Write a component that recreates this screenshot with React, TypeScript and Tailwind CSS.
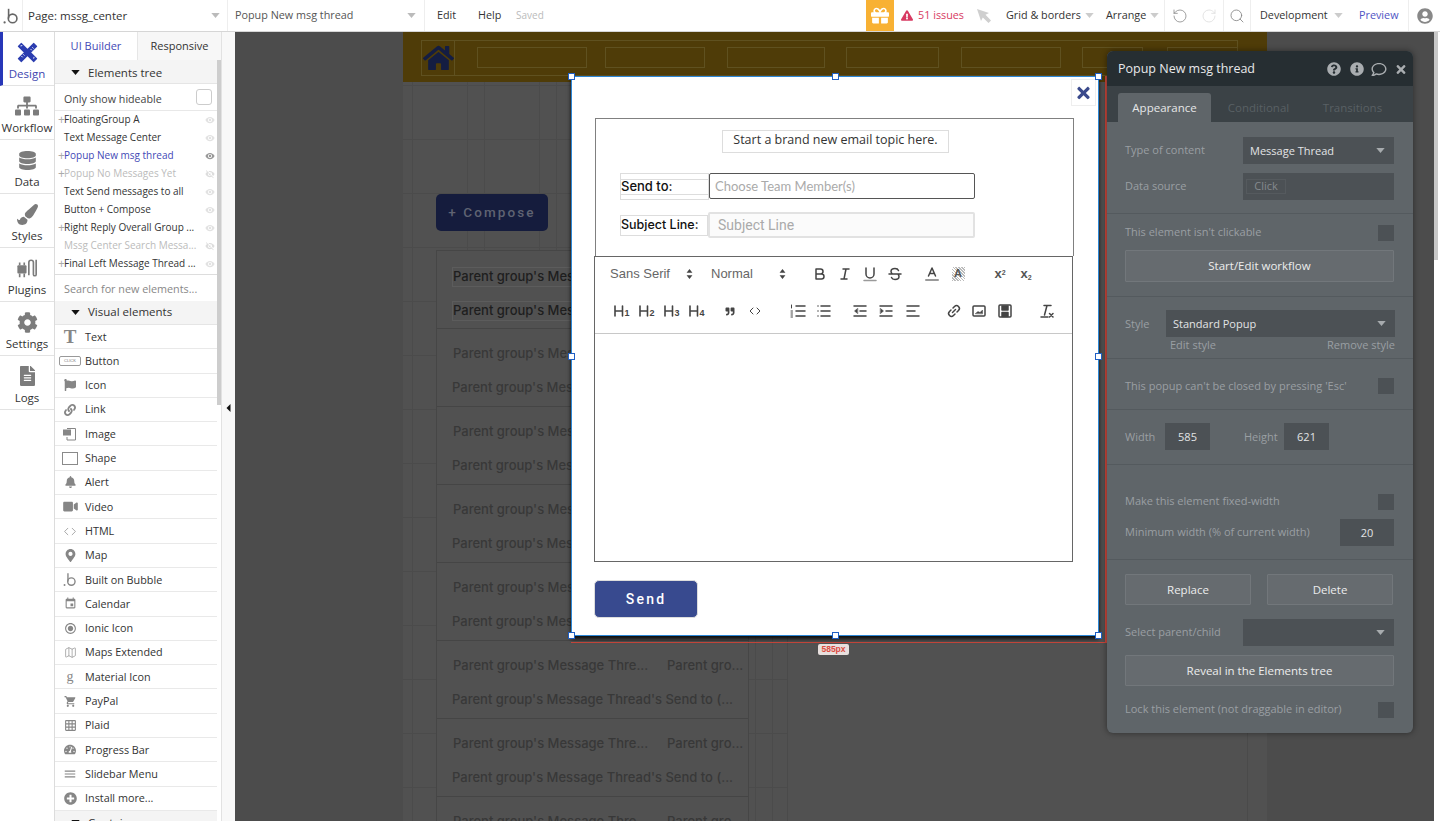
import React from "react";
import {
  FaSitemap, FaDatabase, FaPaintBrush, FaCog, FaFileAlt, FaBell, FaVideo, FaMapMarkerAlt, FaPlusCircle, FaTachometerAlt, FaLink, FaFlag, FaHome, FaGift, FaExclamationTriangle, FaQuestionCircle, FaInfoCircle, FaRegComment, FaTimes, FaUserCircle, FaQuoteRight,
} from "react-icons/fa";
import { MdEvent, MdRadioButtonChecked, MdShoppingCart, MdGridOn, MdMenu, MdVisibility, MdVisibilityOff } from "react-icons/md";
import { Search, Map as MapIcon, RotateCcw, RotateCw, Code } from "lucide-react";

const Caret = ({ className = "" }: { className?: string }) => (
  <svg viewBox="0 0 10 6" className={`w-[9px] h-[5px] ${className}`}><path d="M0 0h10L5 6z" fill="currentColor" /></svg>
);

const BubbleLogo = ({ className = "" }: { className?: string }) => (
  <svg viewBox="0 0 20 22" className={className} fill="none" stroke="currentColor">
    <circle cx="2" cy="19" r="1.4" fill="currentColor" stroke="none" />
    <path d="M7 2v12" strokeWidth="2" />
    <circle cx="12" cy="14" r="5.4" strokeWidth="2" />
  </svg>
);

const DesignIcon = () => (
  <svg viewBox="0 0 24 24" className="w-[21px] h-[21px] text-[#2b3db0]">
    <g fill="currentColor">
      <rect x="-1" y="9" width="26" height="6" rx="0.6" transform="rotate(45 12 12)" />
      <rect x="-1" y="9" width="26" height="6" rx="0.6" transform="rotate(-45 12 12)" />
    </g>
    <g stroke="#fff" strokeWidth="1">
      <path d="M5 16l1.500 1.500M7 14l1.500 1.500M15.500 8l1.500 1.500M17.500 6l1.500 1.500M4 4.500l2 -.5M19 19l.5 -2" />
    </g>
  </svg>
);

const PluginIcon = () => (
  <svg viewBox="0 0 24 24" className="w-[22px] h-[22px] text-[#7c7c7c]" fill="none">
    <rect x="1.500" y="9" width="10" height="9" rx="1" fill="currentColor" />
    <path d="M4 18v4M9 18v4M4 9V6M9 9V6" stroke="currentColor" strokeWidth="1.800" />
    <path d="M14 20V6a2.500 2.500 0 0 1 5 0v13a1.500 1.500 0 0 0 3 0V3" stroke="currentColor" strokeWidth="1.800" />
  </svg>
);

const rail = [
  { label: "Workflow", icon: <FaSitemap className="w-[24px] h-[22px] text-[#7c7c7c]" /> },
  { label: "Data", icon: <FaDatabase className="w-[17px] h-[19px] text-[#7c7c7c]" /> },
  { label: "Styles", icon: <FaPaintBrush className="w-[21px] h-[21px] text-[#7c7c7c]" /> },
  { label: "Plugins", icon: <PluginIcon /> },
  { label: "Settings", icon: <FaCog className="w-[21px] h-[21px] text-[#7c7c7c]" /> },
  { label: "Logs", icon: <FaFileAlt className="w-[15px] h-[20px] text-[#7c7c7c]" /> },
];

const tree = [
  { t: "FloatingGroup A", plus: true },
  { t: "Text Message Center" },
  { t: "Popup New msg thread", plus: true, active: true },
  { t: "Popup No Messages Yet", plus: true, hidden: true },
  { t: "Text Send messages to all" },
  { t: "Button + Compose" },
  { t: "Right Reply Overall Group ...", plus: true },
  { t: "Mssg Center Search Messa...", hidden: true },
  { t: "Final Left Message Thread ...", plus: true },
];

const ic = "text-[#868686]";
const visual = [
  { t: "Text", i: <span className={`font-['Liberation_Serif'] font-bold text-[19px] leading-none ${ic}`}>T</span> },
  { t: "Button", i: <span className="w-[22px] h-[10px] border border-[#999] rounded-[2px] text-[4px] leading-[8px] text-center text-[#777] font-['Liberation_Sans']">CLICK</span> },
  { t: "Icon", i: <FaFlag className={`w-[12px] h-[12px] ${ic}`} /> },
  { t: "Link", i: <FaLink className={`w-[12px] h-[12px] ${ic}`} /> },
  {
    t: "Image",
    i: (
      <svg viewBox="0 0 14 14" className="w-[14px] h-[14px] text-[#868686]" fill="none" stroke="currentColor">
        <path d="M4 1.500h8.500V13H4V10" />
        <rect x="0.500" y="3" width="7" height="5" fill="currentColor" />
      </svg>
    ),
  },
  { t: "Shape", i: <span className="w-[16px] h-[13px] border border-[#8a8a8a]" /> },
  { t: "Alert", i: <FaBell className={`w-[11px] h-[12px] ${ic}`} /> },
  { t: "Video", i: <FaVideo className={`w-[15px] h-[13px] ${ic}`} /> },
  { t: "HTML", i: <Code className={`w-[16px] h-[13px] ${ic}`} strokeWidth={1.300} /> },
  { t: "Map", i: <FaMapMarkerAlt className={`w-[11px] h-[13px] ${ic}`} /> },
  { t: "Built on Bubble", i: <BubbleLogo className={`w-[14px] h-[15px] ${ic}`} /> },
  { t: "Calendar", i: <MdEvent className={`w-[13px] h-[13px] ${ic}`} /> },
  { t: "Ionic Icon", i: <MdRadioButtonChecked className={`w-[13px] h-[13px] ${ic}`} /> },
  { t: "Maps Extended", i: <MapIcon className={`w-[13px] h-[13px] ${ic}`} strokeWidth={1.200} /> },
  { t: "Material Icon", i: <span className={`font-['Liberation_Serif'] text-[14px] leading-none ${ic}`}>g</span> },
  { t: "PayPal", i: <MdShoppingCart className={`w-[13px] h-[13px] ${ic}`} /> },
  { t: "Plaid", i: <MdGridOn className={`w-[13px] h-[13px] ${ic}`} /> },
  { t: "Progress Bar", i: <FaTachometerAlt className={`w-[12px] h-[11px] ${ic}`} /> },
  { t: "Slidebar Menu", i: <MdMenu className={`w-[14px] h-[14px] ${ic}`} /> },
  { t: "Install more...", i: <FaPlusCircle className={`w-[13px] h-[13px] ${ic}`} /> },
];

const TopBar = () => (
  <div className="h-8 shrink-0 flex items-stretch bg-white border-b border-[#d6d6d6] text-[10.800px] text-[#333] font-['Open_Sans']">
    <div className="w-[23px] border-r border-[#eee] flex items-center justify-center text-[#666]"><BubbleLogo className="w-[16px] h-[18px]" /></div>
    <div className="w-[205px] border-r border-[#eee] flex items-center justify-between pl-[5px] pr-[7px] text-[11.500px]">
      <span>Page: mssg_center</span><Caret className="text-[#bbb]" />
    </div>
    <div className="w-[197px] border-r border-[#eee] flex items-center justify-between pl-[7px] pr-[8px] text-[#555] text-[10.800px]">
      <span>Popup New msg thread</span><Caret className="text-[#bbb]" />
    </div>
    <div className="w-[53px] pl-[12px] flex items-center">Edit</div>
    <div className="w-[38px] flex items-center">Help</div>
    <div className="flex items-center text-[#bbb] text-[10px]">Saved</div>
    <div className="flex-1" />
    <div className="w-[28px] bg-[#f8b133] flex items-center justify-center"><FaGift className="w-[18px] h-[19px] text-white" /></div>
    <div className="w-[77px] flex items-center gap-[5px] pl-[7px] text-[#d83a62]">
      <FaExclamationTriangle className="w-[12px] h-[11px]" /><span>51 issues</span>
    </div>
    <div className="w-[30px] flex items-center pl-[5px]">
      <svg viewBox="0 0 16 16" className="w-[16px] h-[16px] text-[#cfcfcf]"><path d="M1 1l12 4-3.500 1.800L15 12.500 12.500 15 6.800 9.500 5 13z" fill="currentColor" /></svg>
    </div>
    <div className="w-[98px] flex items-center gap-[4px] pl-[5px]"><span>Grid &amp; borders</span><Caret className="text-[#ccc]" /></div>
    <div className="w-[66px] flex items-center gap-[4px] pl-[7px] border-r border-[#eee]"><span>Arrange</span><Caret className="text-[#ccc]" /></div>
    <div className="w-[30px] flex items-center justify-center"><RotateCcw className="w-[16px] h-[16px] text-[#888]" strokeWidth={1.200} /></div>
    <div className="w-[29px] border-r border-[#eee] flex items-center justify-center"><RotateCw className="w-[16px] h-[16px] text-[#ddd]" strokeWidth={1.200} /></div>
    <div className="w-[27px] border-r border-[#eee] flex items-center justify-center"><Search className="w-[16px] h-[16px] text-[#888]" strokeWidth={1.300} /></div>
    <div className="w-[99px] flex items-center gap-[6px] pl-[9px]"><span>Development</span><Caret className="text-[#ccc]" /></div>
    <div className="w-[59px] flex items-center pl-[9px] border-r border-[#eee] text-[#4f55c4]">Preview</div>
    <div className="w-[31px] flex items-center justify-center"><FaUserCircle className="w-[16px] h-[16px] text-[#888]" /></div>
  </div>
);

const SideRail = () => (
  <div className="w-[55px] shrink-0 border-r border-[#dcdcdc] bg-white font-['Open_Sans'] text-[11.500px] text-[#333]">
    <div className="h-[54px] border-b border-[#e3e3e3] border-l-[3px] border-l-[#2737b8] flex flex-col items-center pt-[8px] pr-[3px] text-[#3e46b0]">
      <div className="h-[24px] flex items-center"><DesignIcon /></div>
      <span className="mt-[1px]">Design</span>
    </div>
    {rail.map((r) => (
      <div key={r.label} className="h-[54px] border-b border-[#e3e3e3] flex flex-col items-center pt-[8px]">
        <div className="h-[24px] flex items-center">{r.icon}</div>
        <span className="mt-[1px]">{r.label}</span>
      </div>
    ))}
  </div>
);

const SectionHeader = ({ t, className = "" }: { t: string; className?: string }) => (
  <div className={`h-[24px] bg-[#f4f4f4] border-b border-[#e5e5e5] flex items-center pl-[16px] text-[11.500px] text-[#333] ${className}`}>
    <Caret className="text-[#111] mr-[8px]" />
    <span>{t}</span>
  </div>
);

const ElementsPanel = () => (
  <div className="w-[167px] shrink-0 bg-white font-['Open_Sans'] flex flex-col overflow-hidden relative border-r border-[#e2e2e2]">
    <div className="h-[28px] shrink-0 flex text-[11px]">
      <div className="w-[83px] flex items-center justify-center text-[#4349b6] border-r border-[#e6e6e6]">UI Builder</div>
      <div className="flex-1 flex items-center justify-center bg-[#f7f7f7] text-[#333]">Responsive</div>
    </div>
    <div className="w-[162px]">
      <SectionHeader t="Elements tree" className="pt-[2px]" />
      <div className="h-[27px] flex items-center pl-[9px] pr-[5px] justify-between border-b border-[#e8e8e8] text-[10.700px] text-[#444]">
        <span className="pt-[4px]">Only show hideable</span>
        <span className="w-[16px] h-[16px] border border-[#ccc] rounded-[3px]" />
      </div>
      <div className="h-[164px] border-b border-[#ddd]">
        {tree.map((r) => (
          <div key={r.t} className={`h-[18px] flex items-center pb-[1px] text-[10px] whitespace-nowrap ${r.active ? "text-[#4349b6]" : r.hidden ? "text-[#bbb]" : "text-[#333]"}`}>
            <span className="w-[9px] text-center text-[#aaa] text-[12px] leading-none pl-[3px]">{r.plus ? "+" : ""}</span>
            <span className="flex-1">{r.t}</span>
            {r.hidden
              ? <MdVisibilityOff className="w-[10px] h-[10px] text-[#ddd] mr-[2px]" />
              : <MdVisibility className={`w-[10px] h-[10px] mr-[2px] ${r.active ? "text-[#999]" : "text-[#e2e2e2]"}`} />}
          </div>
        ))}
      </div>
      <div className="h-[26px] flex items-center pl-[9px] pt-[2px] text-[10.800px] text-[#888]">Search for new elements...</div>
      <SectionHeader t="Visual elements" className="pb-[1px]" />
      {visual.map((v) => (
        <div key={v.t} className="h-[24.300px] border-b border-[#e9e9e9] flex items-center text-[10.800px] text-[#333]">
          <span className="w-[30px] flex items-center justify-center">{v.i}</span>
          <span>{v.t}</span>
        </div>
      ))}
      <SectionHeader t="Containers" />
    </div>
    <div className="absolute right-0 top-[28px] w-[4px] h-[345px] bg-[#cdcdcd]" />
  </div>
);

const Gutter = () => (
  <div className="w-[13px] shrink-0 bg-[#f8f8f8] flex items-center justify-center pb-[38px]">
    <svg viewBox="0 0 5 10" className="w-[5px] h-[8px] text-[#111]"><path d="M5 0v10L0 5z" fill="currentColor" /></svg>
  </div>
);

const parentRow = "text-[13px] font-medium font-['Inter'] whitespace-nowrap overflow-hidden";

const ThreadRow = ({ first }: { first?: boolean }) => (
  <div className={`h-[78px] shrink-0 border-b border-[#454545] pl-[16px] ${first ? "pt-[16px]" : "pt-[15px]"}`}>
    <div className={`flex h-[20px] items-center ${first ? "text-[#1e1e1e] border border-[#5c5c5c] -ml-px" : "text-[#383838]"}`}>
      <span className={`w-[214px] shrink-0 ${parentRow}`}>Parent group's Message Thre...</span>
      <span className={`${parentRow} text-[12px]`}>Parent gro...</span>
    </div>
    <div className={`mt-[14px] h-[20px] flex items-center -ml-px ${first ? "text-[#1e1e1e] border border-[#5c5c5c] -ml-[2px]" : "text-[#383838]"} ${parentRow}`}>
      Parent group's Message Thread's Send to (...
    </div>
  </div>
);

const Handle = ({ className }: { className: string }) => (
  <span className={`absolute w-[7px] h-[7px] bg-white border border-[#1f5fc4] ${className}`} />
);

const ToolIcon = ({ className = "", children }: { className?: string; children: React.ReactNode }) => (
  <span className={`w-[18px] h-[18px] shrink-0 flex items-center justify-center text-[#444] ${className}`}>{children}</span>
);

const S = ({ children }: { children: React.ReactNode }) => (
  <svg viewBox="0 0 18 18" className="w-[18px] h-[18px]" fill="none" stroke="currentColor" strokeWidth="1.500" strokeLinecap="round" strokeLinejoin="round">{children}</svg>
);

const Updown = () => (
  <svg viewBox="0 0 8 12" className="w-[7px] h-[10px] text-[#444]"><path d="M4 0l3.500 4.500h-7zM4 12L.5 7.500h7z" fill="currentColor" /></svg>
);

const Heading = ({ n }: { n: string }) => (
  <svg viewBox="0 0 18 18" className="w-[18px] h-[18px] text-[#444]" fill="none" stroke="currentColor" strokeWidth="1.600" strokeLinecap="round">
    <path d="M2 4v10M9.500 4v10M2 9h7.500" />
    <text x="11.500" y="14" fontSize="9" fontWeight="700" fill="currentColor" stroke="none" fontFamily="Liberation Sans">{n}</text>
  </svg>
);

const Toolbar = () => (
  <div className="h-[77px] border-b border-[#c8c8c8] font-['Liberation_Sans'] text-[13px] text-[#666]">
    <div className="h-[33px] flex items-center pl-[15px]">
      <div className="w-[101px] flex items-center"><span className="w-[76px]">Sans Serif</span><Updown /></div>
      <div className="w-[100px] flex items-center"><span className="w-[68px]">Normal</span><Updown /></div>
      <ToolIcon>
        <S>
          <path d="M5 4h4.500a2.500 2.500 0 0 1 0 5H5zM5 9h5.500a2.500 2.500 0 0 1 0 5H5z" />
        </S>
      </ToolIcon>
      <ToolIcon className="ml-[7px]"><S><path d="M7 4h6M5 14h6M8 14l2-10" /></S></ToolIcon>
      <ToolIcon className="ml-[7px]"><S><path d="M5 3v6a4 4 0 0 0 8 0V3" /><path d="M3 15.500h12" stroke="#9a9a9a" /></S></ToolIcon>
      <ToolIcon className="ml-[7px]"><S><path d="M3 9h12M12.500 5.500C12 4.200 10.500 3.500 9 3.500c-2 0-4 1-4 3 0 1 .5 1.700 1.500 2.500M5.500 12.500c.5 1.300 2 2 3.500 2 2 0 4-1 4-3 0-.8-.3-1.500-1-2.500" /></S></ToolIcon>
      <ToolIcon className="ml-[19px]"><S><path d="M5.500 11L9 3l3.500 8M6.700 8.500h4.600" /><path d="M3 15h12" stroke="#9a9a9a" strokeWidth="2" /></S></ToolIcon>
      <ToolIcon className="ml-[8px]">
        <span className="w-[13px] h-[14px] bg-[repeating-linear-gradient(45deg,#bbb_0,#bbb_1px,#fff_1px,#fff_2px)] flex items-center justify-center font-bold text-[11px] text-[#555]">A</span>
      </ToolIcon>
      <ToolIcon className="ml-[24px]"><span className="font-bold text-[13px] leading-none text-[#555] whitespace-nowrap">x<sup className="text-[7px]">2</sup></span></ToolIcon>
      <ToolIcon className="ml-[8px]"><span className="font-bold text-[13px] leading-none text-[#555] whitespace-nowrap">x<sub className="text-[7px]">2</sub></span></ToolIcon>
    </div>
    <div className="h-[42px] flex items-center pl-[18px]">
      <ToolIcon><Heading n="1" /></ToolIcon>
      <ToolIcon className="ml-[7px]"><Heading n="2" /></ToolIcon>
      <ToolIcon className="ml-[7px]"><Heading n="3" /></ToolIcon>
      <ToolIcon className="ml-[7px]"><Heading n="4" /></ToolIcon>
      <ToolIcon className="ml-[15px]"><FaQuoteRight className="w-[10px] h-[9px]" /></ToolIcon>
      <ToolIcon className="ml-[7px]"><Code className="w-[12px] h-[12px]" strokeWidth={2} /></ToolIcon>
      <ToolIcon className="ml-[25px]"><S><path d="M7 4h9M7 9h9M7 14h9" /><path d="M2.500 3v3M2 9h1.500M2 11h1.500M2 13h1.500M2 15h1.500" strokeWidth="1" /></S></ToolIcon>
      <ToolIcon className="ml-[8px]"><S><path d="M6 4h9M6 9h9M6 14h9M3 4h.01M3 9h.01M3 14h.01" /></S></ToolIcon>
      <ToolIcon className="ml-[18px]"><S><path d="M3 14h12M3 4h12M9 9h6" /><path d="M6.500 6.500L3.500 9l3 2.500z" fill="currentColor" strokeWidth="0.500" /></S></ToolIcon>
      <ToolIcon className="ml-[8px]"><S><path d="M3 14h12M3 4h12M9 9h6" /><path d="M3.500 6.500L6.500 9l-3 2.500z" fill="currentColor" strokeWidth="0.500" /></S></ToolIcon>
      <ToolIcon className="ml-[9px]"><S><path d="M3 4h12M3 9h8M3 14h12" /></S></ToolIcon>
      <ToolIcon className="ml-[23px]"><S><path d="M7.500 10.500l3-3" /><path d="M8 6l1.500-1.500a2.800 2.800 0 0 1 4 4L12 10" /><path d="M10 12l-1.500 1.500a2.800 2.800 0 0 1-4-4L6 8" /></S></ToolIcon>
      <ToolIcon className="ml-[7px]"><S><rect x="3" y="4" width="12" height="10" rx="1" /><path d="M5.500 11.500l2.500-2 2 1 2.500-2.500v3.500z" fill="currentColor" strokeWidth="0.500" /></S></ToolIcon>
      <ToolIcon className="ml-[8px]"><S><rect x="3" y="3" width="12" height="12" rx="1" /><rect x="6" y="4" width="6" height="4" fill="currentColor" /><rect x="6" y="10.500" width="6" height="4" fill="currentColor" /></S></ToolIcon>
      <ToolIcon className="ml-[23px]"><S><path d="M7 3.500h7M10 3.500L7.500 13M4 15h7" /><path d="M12.500 11.500l3.500 3.500M16 11.500L12.500 15" /></S></ToolIcon>
    </div>
  </div>
);

const Popup = () => (
  <div className="absolute left-[336px] top-[44px] w-[528px] h-[560px] bg-white border border-[#2d87d6] shadow-[0_3px_4px_rgba(0,0,0,0.85)] pl-[22px] pt-[41px]">
    <span className="absolute right-[2px] top-[2px] w-[25px] h-[27px] border border-[#eee] flex items-center justify-center">
      <FaTimes className="w-[17px] h-[18px] text-[#3a4a8c]" />
    </span>
    <div className="ml-px w-[479px] h-[138px] border border-[#808080] border-b-0">
      <div className="ml-[126px] mt-[11px] w-[227px] h-[23px] border border-[#ddd] flex items-center justify-center pb-[2px] font-['Open_Sans'] text-[12.500px] text-[#333]">
        Start a brand new email topic here.
      </div>
      <div className="mt-[20px] ml-[24px] flex">
        <div className="w-[89px] h-[27px] border border-[#ddd] flex items-center">
          <div className="w-full h-[16px] border-y border-[#ddd] flex items-center font-['Inter'] font-medium text-[13px] text-[#111]">Send to:</div>
        </div>
        <div className="w-[266px] h-[26px] border border-[#555] rounded-[2px] flex items-center pl-[5px] pt-[1px] font-['Lato'] text-[13px] text-[#aaa]">Choose Team Member(s)</div>
      </div>
      <div className="mt-[12px] ml-[24px] flex">
        <div className="w-[88px] h-[21px] mt-[3px] border border-[#ddd] flex items-center font-['Inter'] font-medium text-[12.500px] text-[#111] whitespace-nowrap overflow-hidden">Subject Line:</div>
        <div className="w-[267px] h-[26px] border-2 border-[#e2e2e2] rounded-[2px] bg-[#fbfbfb] flex items-center pl-[8px] font-['Roboto'] text-[14px] text-[#aaa]">Subject Line</div>
      </div>
    </div>
    <div className="w-[479px] h-[306px] border border-[#666]">
      <Toolbar />
    </div>
    <div className="mt-[18px] w-[104px] h-[38px] bg-[#384a8f] border border-[#ddd] rounded-[5px] flex items-center justify-center font-['Roboto'] font-medium text-[14px] tracking-[2.200px] text-white">Send</div>
  </div>
);

const Canvas = () => (
  <div className="relative flex-1 bg-[#4c4c4c] overflow-hidden">
    {/* page */}
    <div className="absolute left-[168px] top-0 w-[864px] h-[800px] bg-[#515151]" />
    <div className="absolute left-[168px] top-[50px] w-[384px] h-[750px] [background-image:linear-gradient(to_right,#4b4b4b_1px,transparent_1px),linear-gradient(to_right,#4b4b4b_1px,transparent_1px),linear-gradient(to_bottom,#4b4b4b_1px,transparent_1px)] [background-size:72px_100%,72px_100%,100%_54px] [background-position:9px_0,64px_0,0_3px]" />
    {/* header */}
    <div className="absolute left-[168px] top-0 w-[864px] h-[50px] bg-[#4f3c08]" />
    <div className="absolute left-[186px] top-[8px] w-[817px] h-[36px] border border-[#5f5120]" />
    <div className="absolute left-[186px] top-[8px] w-[34px] h-[36px] border border-[#5f5120] flex items-center justify-center">
      <FaHome className="w-[31px] h-[28px] text-[#141d42]" />
    </div>
    <div className="absolute left-[242px] top-[15px] w-[110px] h-[21px] border border-[#5f5120]" />
    <div className="absolute left-[370px] top-[15px] w-[100px] h-[21px] border border-[#5f5120]" />
    <div className="absolute left-[492px] top-[15px] w-[98px] h-[21px] border border-[#5f5120]" />
    <div className="absolute left-[611px] top-[15px] w-[93px] h-[21px] border border-[#5f5120]" />
    <div className="absolute left-[726px] top-[15px] w-[100px] h-[21px] border border-[#5f5120]" />
    <div className="absolute left-[847px] top-[15px] w-[61px] h-[21px] border border-[#5f5120]" />
    <div className="absolute left-[932px] top-[15px] w-[71px] h-[21px] border border-[#5f5120]" />
    {/* compose */}
    <div className="absolute left-[201px] top-[162px] w-[112px] h-[37px] rounded-[5px] bg-[#151c3d] flex items-center justify-center font-['Roboto'] font-medium text-[13.500px] tracking-[2.100px] text-[#5f6372]">+ Compose</div>
    {/* thread list */}
    <div className="absolute left-[201px] top-[218px] w-[313px] h-[600px] bg-[#515151] border-x border-t border-[#464646] flex flex-col">
      <ThreadRow first />
      <ThreadRow />
      <ThreadRow />
      <ThreadRow />
      <ThreadRow />
      <ThreadRow />
      <ThreadRow />
      <ThreadRow />
    </div>
    <div className="absolute left-[552px] top-[50px] w-px h-[750px] bg-[#4a4a4a]" />
    <div className="absolute left-[1012px] top-[50px] w-px h-[750px] bg-[#4a4a4a]" />
    {/* selection guides */}
    <div className="absolute left-[336px] top-[610px] w-[535px] h-px bg-[#c9473c]" />
    <div className="absolute left-[870px] top-[44px] w-[2px] h-[567px] bg-[#c9473c]" />
    <Popup />
    <Handle className="left-[333px] top-[41px]" />
    <Handle className="left-[597px] top-[41px]" />
    <Handle className="left-[860px] top-[41px]" />
    <Handle className="left-[333px] top-[321px]" />
    <Handle className="left-[860px] top-[321px]" />
    <Handle className="left-[333px] top-[600px]" />
    <Handle className="left-[597px] top-[600px]" />
    <Handle className="left-[860px] top-[600px]" />
    <span className="absolute left-[583px] top-[612px] w-[31px] h-[11px] rounded-[2px] bg-[#e8e0de] text-[#dc4a3f] font-['Liberation_Sans'] font-bold text-[8.500px] leading-[11px] text-center">585px</span>
    {/* property panel */}
    <PropertyPanel />
  </div>
);

const dark = "bg-[#4c5155]";
const label = "text-[11px] leading-[16px] text-[#9a9fa3]";
const lab = "text-[11px] leading-[16px] text-[#9a9fa3] pb-[2px]";
const PSelect = ({ w, text }: { w: string; text?: string }) => (
  <div className={`${w} h-[27px] ${dark} flex items-center justify-between pl-[7px] pr-[9px] text-[11px] text-[#e2e4e5]`}>
    <span className="pt-[2px]">{text}</span><Caret className="text-[#a7abae]" />
  </div>
);
const Check = () => <span className={`w-[16px] h-[16px] ${dark}`} />;
const PBtn = ({ className, children }: { className: string; children: React.ReactNode }) => (
  <div className={`h-[31px] bg-[#666b6f] border border-[#72777b] rounded-[1px] flex items-center justify-center text-[11.500px] text-[#eceded] ${className}`}>{children}</div>
);
const Sec = ({ className, children }: { className: string; children?: React.ReactNode }) => (
  <div className={`border-b border-[#545a5e] pl-[18px] pr-[19px] ${className}`}>{children}</div>
);
const Val = ({ w, children }: { w: string; children: React.ReactNode }) => (
  <span className={`${w} h-[27px] ${dark} flex items-center justify-center pt-[2px] text-[11px] text-[#e2e4e5]`}>{children}</span>
);

const PropertyPanel = () => (
  <div className="absolute left-[872px] top-[19px] w-[306px] h-[682px] rounded-[6px] overflow-hidden bg-[#5f6569] shadow-[0_0_6px_rgba(0,0,0,0.45)] font-['Open_Sans']">
    <div className="h-[35px] bg-[#262e32] flex items-center pl-[11px] pr-[6px] pt-[1px] text-[12.500px] text-[#e8e9ea]">
      <span className="flex-1">Popup New msg thread</span>
      <FaQuestionCircle className="w-[14px] h-[14px] text-[#a9adb0]" />
      <FaInfoCircle className="w-[14px] h-[14px] text-[#a9adb0] ml-[9px]" />
      <FaRegComment className="w-[16px] h-[15px] text-[#a9adb0] ml-[7px]" />
      <FaTimes className="w-[12px] h-[13px] text-[#a9adb0] ml-[8px]" />
    </div>
    <div className="h-[36px] bg-[#3b4246] flex items-end pl-[11px] text-[11.500px]">
      <div className="w-[93px] h-[29px] bg-[#5f6569] rounded-t-[3px] flex items-center justify-center text-[#e6e7e8]">Appearance</div>
      <div className="w-[95px] h-[29px] flex items-center justify-center text-[#596064]">Conditional</div>
      <div className="w-[93px] h-[29px] flex items-center justify-center text-[#596064]">Transitions</div>
    </div>
    <Sec className="pt-[15px] h-[92px]">
      <div className="flex items-center justify-between"><span className={lab}>Type of content</span><PSelect w="w-[151px]" text="Message Thread" /></div>
      <div className="mt-[9px] flex items-center justify-between">
        <span className={lab}>Data source</span>
        <div className={`w-[151px] h-[27px] ${dark} flex items-center pl-[3px]`}>
          <span className="w-[40px] h-[15px] border border-[#555a5e] flex items-center justify-center text-[11px] text-[#858a8e]">Click</span>
        </div>
      </div>
    </Sec>
    <Sec className="pt-[11px] h-[83px]">
      <div className="flex items-center justify-between h-[16px]"><span className={lab}>This element isn't clickable</span><Check /></div>
      <PBtn className="mt-[9px] w-[269px] h-[32px]">Start/Edit workflow</PBtn>
    </Sec>
    <Sec className="pt-[13px] h-[62px]">
      <div className="flex items-center justify-between"><span className={label}>Style</span><PSelect w="w-[229px] -mr-px" text="Standard Popup" /></div>
      <div className={`flex justify-between pl-[45px] -mr-px ${label}`}><span>Edit style</span><span>Remove style</span></div>
    </Sec>
    <Sec className="h-[51px] pt-[4px] flex items-center justify-between"><span className={label}>This popup can't be closed by pressing 'Esc'</span><Check /></Sec>
    <Sec className="pt-[13px] h-[55px]">
      <div className="flex items-center">
        <span className={`w-[40px] ${label}`}>Width</span>
        <Val w="w-[45px]">585</Val>
        <span className={`ml-[34px] w-[40px] ${label}`}>Height</span>
        <Val w="w-[45px]">621</Val>
      </div>
    </Sec>
    <Sec className="pt-[28px] h-[95px]">
      <div className="flex items-center justify-between h-[17px]"><span className={lab}>Make this element fixed-width</span><Check /></div>
      <div className="mt-[9px] flex items-center justify-between">
        <span className={lab}>Minimum width (% of current width)</span>
        <Val w="w-[54px]">20</Val>
      </div>
    </Sec>
    <div className="pl-[18px] pr-[19px] pt-[14px]">
      <div className="flex gap-[16px]"><PBtn className="w-[126px]">Replace</PBtn><PBtn className="w-[126px]">Delete</PBtn></div>
      <div className="mt-[14px] flex items-center justify-between"><span className={lab}>Select parent/child</span><PSelect w="w-[151px]" /></div>
      <PBtn className="mt-[9px] w-[269px]">Reveal in the Elements tree</PBtn>
      <div className="mt-[15px] flex items-center justify-between h-[17px]"><span className={lab}>Lock this element (not draggable in editor)</span><Check /></div>
    </div>
  </div>
);

export default function App() {
  return (
    <div className="w-[1440px] h-[821px] flex flex-col overflow-hidden bg-white">
      <TopBar />
      <div className="flex-1 flex min-h-0">
        <SideRail />
        <ElementsPanel />
        <Gutter />
        <Canvas />
        <div className="w-[6px] shrink-0 bg-white pr-[2px]"><div className="h-[228px] bg-[#c8c8c8]" /></div>
      </div>
    </div>
  );
}
